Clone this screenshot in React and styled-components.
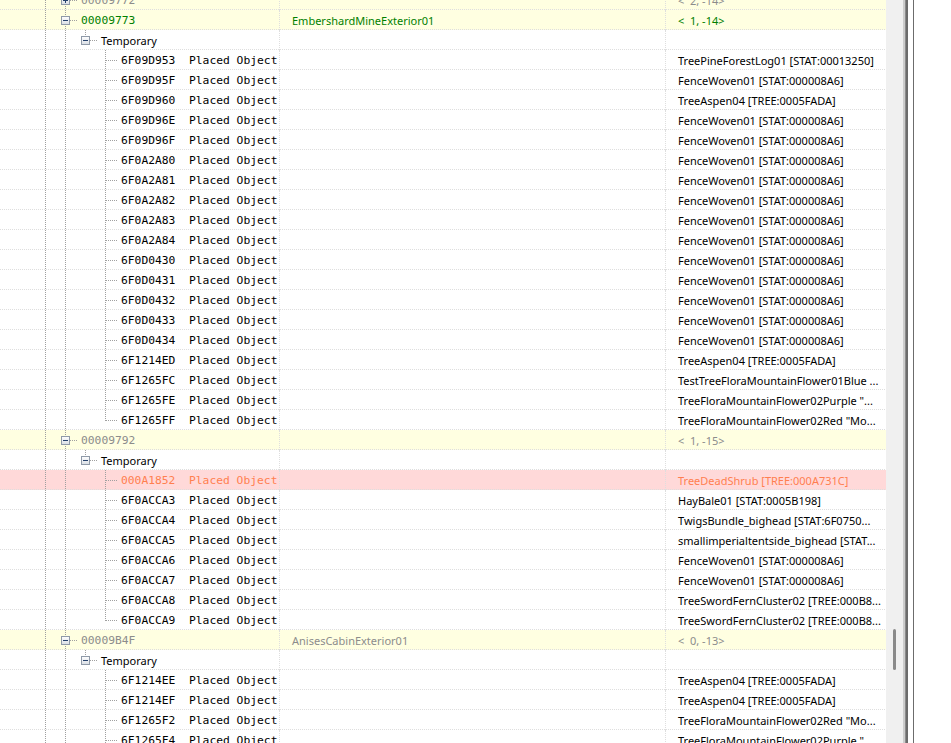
import React from 'react';
import styled, { createGlobalStyle } from 'styled-components';

const GlobalStyle = createGlobalStyle`
  html, body { margin: 0; padding: 0; background: #ffffff; overflow: hidden; }
  #root { width: 951px; height: 743px; }
`;

const PALETTE = {
  normal: { bg: '#ffffff', fg: '#000000' },
  cellGreen: { bg: '#ffffe1', fg: '#008000' },
  cellGray: { bg: '#ffffe1', fg: '#8c8c8c' },
  conflict: { bg: '#ffd9d9', fg: '#ff7f50' },
};

const SEP = '#dedede';
const SANS = "'Noto Sans', 'Open Sans', sans-serif";

const Frame = styled.div`
  display: flex;
  width: 951px;
  height: 743px;
  overflow: hidden;
  background: #ffffff;
`;

const TreePane = styled.div`
  width: 886px;
  flex: none;
  height: 100%;
  overflow: hidden;
`;

const RowList = styled.div`
  display: flex;
  flex-direction: column;
  margin-top: -10px;
`;

const Row = styled.div`
  display: grid;
  grid-template-columns: 280px 386px 220px;
  height: 20px;
  background-color: ${(p) => PALETTE[p.$tone].bg};
  background-image: repeating-linear-gradient(to right, ${SEP} 0 1px, transparent 1px 2px);
  background-size: 100% 1px;
  background-position: left bottom;
  background-repeat: no-repeat;
  color: ${(p) => PALETTE[p.$tone].fg};
`;

const Cell = styled.div`
  box-sizing: border-box;
  height: 20px;
  display: flex;
  align-items: center;
  overflow: hidden;
  white-space: pre;
  border-right: ${(p) => (p.$last ? 'none' : `1px dotted ${SEP}`)};
  padding-left: ${(p) => p.$pad || 0}px;
  font-family: ${SANS};
  font-size: 11px;
`;

const Gutter = styled.svg`
  flex: none;
  display: block;
  height: 20px;
`;

const MonoLabel = styled.span`
  font-family: 'DejaVu Sans Mono', 'Liberation Mono', monospace;
  font-size: 11.3px;
  white-space: pre;
`;

const SansLabel = styled.span`
  font-family: ${SANS};
  font-size: 11px;
  white-space: pre;
`;

const ScrollTrack = styled.div`
  width: 17px;
  flex: none;
  height: 100%;
  background: #f0f0f0;
  box-sizing: border-box;
  padding: 629px 0 0 7px;
`;

const Thumb = styled.div`
  width: 3px;
  height: 41px;
  border-radius: 2px;
  background: #8a8a8a;
`;

const Splitter = styled.div`
  width: 5px;
  flex: none;
  height: 100%;
  background: linear-gradient(
    to right,
    #cdcdcd 0 2px,
    #8c8c8c 2px 3px,
    #6c6c6c 3px 5px
  );
`;

const SplitGap = styled.div`
  width: 5px;
  flex: none;
  height: 100%;
  background: #ffffff;
`;

const SplitEdge = styled.div`
  width: 1px;
  flex: none;
  height: 100%;
  background: #6c6c6c;
`;

const Rest = styled.div`
  flex: 1;
  background: #ffffff;
`;

const LINE = '#a0a0a0';

function Expander({ cx, open }) {
  return (
    <g shapeRendering="crispEdges">
      <rect x={cx - 3.5} y={6.5} width={8} height={8} fill="url(#btnGrad)" stroke="#8f9aa8" />
      <line x1={cx - 2} y1={10.5} x2={cx + 3} y2={10.5} stroke="#24406b" />
      {!open && <line x1={cx + 0.5} y1={8} x2={cx + 0.5} y2={13} stroke="#24406b" />}
    </g>
  );
}

function TreeGutter({ level, node, open, last }) {
  const cx = 45 + level * 20;
  const width = cx + 16;
  const dash = { stroke: LINE, strokeDasharray: '1 1', shapeRendering: 'crispEdges' };
  return (
    <Gutter width={width} viewBox={`0 0 ${width} 20`}>
      <defs>
        <linearGradient id="btnGrad" x1="0" y1="0" x2="0" y2="1">
          <stop offset="0" stopColor="#ffffff" />
          <stop offset="1" stopColor="#d8dde4" />
        </linearGradient>
      </defs>
      <line x1={45.5} y1={0} x2={45.5} y2={20} {...dash} />
      <line x1={65.5} y1={0} x2={65.5} y2={20} {...dash} />
      {level === 2 && <line x1={85.5} y1={0} x2={85.5} y2={10} {...dash} />}
      {level === 3 && <line x1={105.5} y1={0} x2={105.5} y2={last ? 11 : 20} {...dash} />}
      {node ? (
        <line x1={cx + 5} y1={10.5} x2={cx + 13} y2={10.5} {...dash} />
      ) : (
        <line x1={cx + 1} y1={10.5} x2={cx + 13} y2={10.5} {...dash} />
      )}
      {node && <Expander cx={cx} open={open} />}
    </Gutter>
  );
}

const leafGroup1 = [
  ['6F09D953', 'TreePineForestLog01 [STAT:00013250]'],
  ['6F09D95F', 'FenceWoven01 [STAT:000008A6]'],
  ['6F09D960', 'TreeAspen04 [TREE:0005FADA]'],
  ['6F09D96E', 'FenceWoven01 [STAT:000008A6]'],
  ['6F09D96F', 'FenceWoven01 [STAT:000008A6]'],
  ['6F0A2A80', 'FenceWoven01 [STAT:000008A6]'],
  ['6F0A2A81', 'FenceWoven01 [STAT:000008A6]'],
  ['6F0A2A82', 'FenceWoven01 [STAT:000008A6]'],
  ['6F0A2A83', 'FenceWoven01 [STAT:000008A6]'],
  ['6F0A2A84', 'FenceWoven01 [STAT:000008A6]'],
  ['6F0D0430', 'FenceWoven01 [STAT:000008A6]'],
  ['6F0D0431', 'FenceWoven01 [STAT:000008A6]'],
  ['6F0D0432', 'FenceWoven01 [STAT:000008A6]'],
  ['6F0D0433', 'FenceWoven01 [STAT:000008A6]'],
  ['6F0D0434', 'FenceWoven01 [STAT:000008A6]'],
  ['6F1214ED', 'TreeAspen04 [TREE:0005FADA]'],
  ['6F1265FC', 'TestTreeFloraMountainFlower01Blue ...'],
  ['6F1265FE', 'TreeFloraMountainFlower02Purple "...'],
  ['6F1265FF', 'TreeFloraMountainFlower02Red "Mo...'],
];

const leafGroup2 = [
  ['000A1852', 'TreeDeadShrub [TREE:000A731C]', 'conflict'],
  ['6F0ACCA3', 'HayBale01 [STAT:0005B198]'],
  ['6F0ACCA4', 'TwigsBundle_bighead [STAT:6F0750...'],
  ['6F0ACCA5', 'smallimperialtentside_bighead [STAT...'],
  ['6F0ACCA6', 'FenceWoven01 [STAT:000008A6]'],
  ['6F0ACCA7', 'FenceWoven01 [STAT:000008A6]'],
  ['6F0ACCA8', 'TreeSwordFernCluster02 [TREE:000B8...'],
  ['6F0ACCA9', 'TreeSwordFernCluster02 [TREE:000B8...'],
];

const leafGroup3 = [
  ['6F1214EE', 'TreeAspen04 [TREE:0005FADA]'],
  ['6F1214EF', 'TreeAspen04 [TREE:0005FADA]'],
  ['6F1265F2', 'TreeFloraMountainFlower02Red "Mo...'],
  ['6F1265F4', 'TreeFloraMountainFlower02Purple "...'],
];

function buildRows() {
  const rows = [];
  rows.push({ kind: 'cell', id: '00009772', editor: '', grid: '<  2, -14>', tone: 'cellGray', open: false });
  const addCell = (id, editor, grid, tone, leaves, continues) => {
    rows.push({ kind: 'cell', id, editor, grid, tone, open: true });
    rows.push({ kind: 'temp' });
    leaves.forEach(([fid, name, tone2], i) => {
      rows.push({
        kind: 'leaf',
        id: fid,
        name,
        tone: tone2 || 'normal',
        last: !continues && i === leaves.length - 1,
      });
    });
  };
  addCell('00009773', 'EmbershardMineExterior01', '<  1, -14>', 'cellGreen', leafGroup1, false);
  addCell('00009792', '', '<  1, -15>', 'cellGray', leafGroup2, false);
  addCell('00009B4F', 'AnisesCabinExterior01', '<  0, -13>', 'cellGray', leafGroup3, true);
  return rows;
}

const ROWS = buildRows();

function TreeRow({ row }) {
  if (row.kind === 'cell') {
    return (
      <Row $tone={row.tone}>
        <Cell>
          <TreeGutter level={1} node open={row.open} />
          <MonoLabel>{row.id}</MonoLabel>
        </Cell>
        <Cell $pad={12}>{row.editor}</Cell>
        <Cell $pad={12} $last>
          {row.grid}
        </Cell>
      </Row>
    );
  }
  if (row.kind === 'temp') {
    return (
      <Row $tone="normal">
        <Cell>
          <TreeGutter level={2} node open />
          <SansLabel>Temporary</SansLabel>
        </Cell>
        <Cell />
        <Cell $last />
      </Row>
    );
  }
  return (
    <Row $tone={row.tone}>
      <Cell>
        <TreeGutter level={3} last={row.last} />
        <MonoLabel>{`${row.id}  Placed Object`}</MonoLabel>
      </Cell>
      <Cell />
      <Cell $pad={12} $last>
        {row.name}
      </Cell>
    </Row>
  );
}

export default function App() {
  return (
    <>
      <GlobalStyle />
      <Frame>
        <TreePane>
          <RowList>
            {ROWS.map((row, i) => (
              <TreeRow key={i} row={row} />
            ))}
          </RowList>
        </TreePane>
        <ScrollTrack>
          <Thumb />
        </ScrollTrack>
        <Splitter />
        <SplitGap />
        <SplitEdge />
        <Rest />
      </Frame>
    </>
  );
}
